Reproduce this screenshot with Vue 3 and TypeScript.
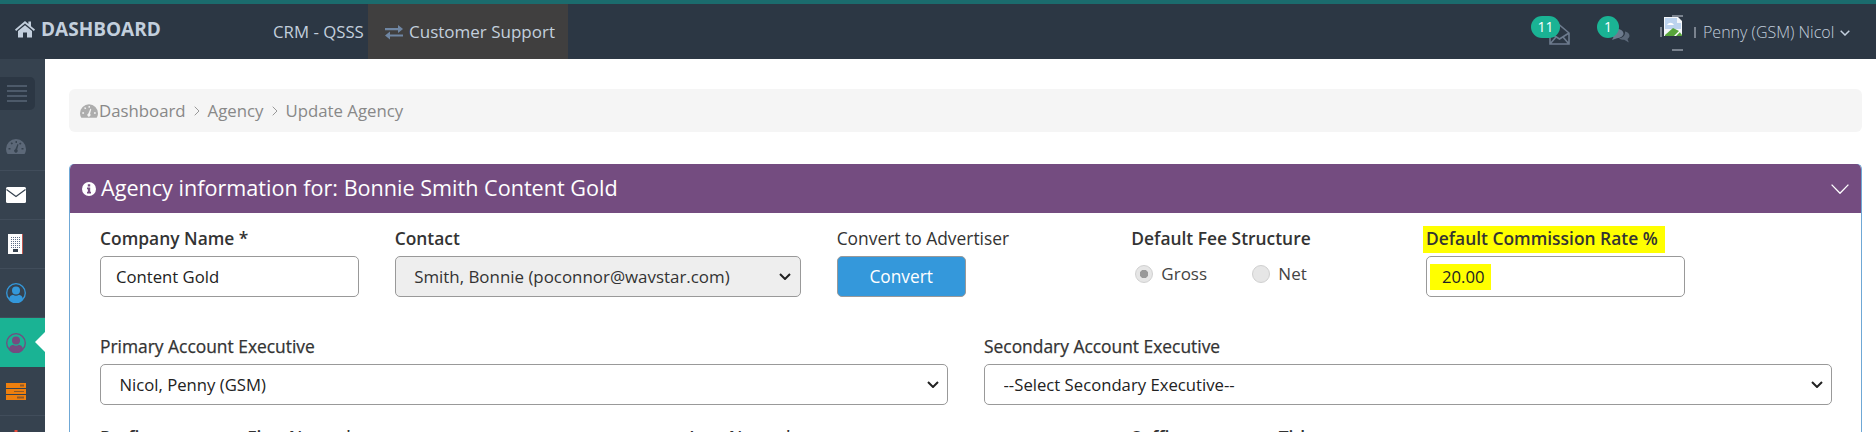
<script setup lang="ts">
const sideItems = ['gauge', 'mail', 'building', 'user', 'active', 'server', 'red']
</script>

<template>
  <div class="page">
    <header class="topbar">
      <div class="brand">
        <svg class="home" viewBox="0 0 20 18" width="20" height="18"><path fill="#c3cfdd" d="M0 9.6 10 1l3.4 2.9V1.6h2.6v4.6l4 3.4-1.1 1.3L10 3.4 1.1 10.9zM3 11l7-5.8 7 5.8v6.6h-5v-5H8v5H3z"/></svg>
        <span>DASHBOARD</span>
      </div>
      <div class="crm">CRM - QSSS</div>
      <div class="support">
        <svg viewBox="0 0 18 16" width="18" height="16"><path fill="#6f86a3" d="M0 4h13V1l5 4-5 4V6.2H0zM18 10.4H5V7.6L0 11.5l5 4v-3h13z"/></svg>
        <span>Customer Support</span>
      </div>
      <div class="spacer"></div>
      <div class="notify mail-n">
        <span class="badge wide">11</span>
        <svg viewBox="0 0 21 21" width="21" height="21"><path fill="none" stroke="#6d7b8e" stroke-width="1.6" d="M1 9 10.5 1 20 9v11H1zM1 9l9.5 6L20 9M1 20l6-7M20 20l-6-7"/></svg>
      </div>
      <div class="notify chat-n">
        <span class="badge">1</span>
        <svg viewBox="0 0 20 16" width="20" height="16"><path fill="#6d7b8e" d="M7 1c3.6 0 6.500 2 6.500 4.600S10.600 10 7 10.200L2 12l1.500-3C1.500 8 .5 7 .5 5.600.5 3 3.400 1 7 1z"/><path fill="#5b6879" d="M15 3.500c2.600.5 4.500 2.200 4.500 4.200 0 1.300-.8 2.400-2 3.200l1.300 3.600-4.600-2.700c-2.200 0-4-.5-5.200-1.500 3.800-.2 6.500-3 6-6.800z"/></svg>
      </div>
      <svg class="avatar" viewBox="0 0 36 36" width="36" height="36">
        <path d="M1 12v10M35 12v11M12 1h11M12 35h11" stroke="#c7ced8" stroke-width="1" fill="none"/>
        <g transform="translate(0 -2)">
          <path fill="#f3f6fa" d="M4 4h14l4 4v15H4z"/>
          <path fill="#bcd3ee" d="M5 5h12v5h4v6H5z"/>
          <path fill="#fff" d="M7 12c2-3 5-3 7 0z"/>
          <path fill="#58a53b" d="M5 22l8-7 6 3 3 4v1H5z"/>
          <path fill="#fff" d="M14 23l6-6v2l-4 4z"/>
        </g>
      </svg>
      <span class="user-name">Penny (GSM) Nicol</span>
      <svg class="caret" viewBox="0 0 10 6" width="10" height="6"><path fill="none" stroke="#c3cfdd" stroke-width="1.5" d="M.7.7 5 5 9.300.7"/></svg>
    </header>

    <div class="body">
      <aside class="sidebar">
        <div class="toggle-wrap">
          <div class="toggle"><i></i><i></i><i></i><i></i></div>
        </div>
        <div v-for="item in sideItems" :key="item" class="side-item" :class="{ on: item === 'active' }">
          <svg v-if="item === 'gauge'" viewBox="0 0 20 15" width="20" height="15">
            <path fill="#5c6878" d="M10 0a10 10 0 0 1 10 10c0 2-.6 3.600-1.500 5h-17A9.500 9.500 0 0 1 0 10 10 10 0 0 1 10 0z"/>
            <path fill="#36424f" d="M9.500 2h1.500v2H9.500zM4.500 4l1.500-.8 1 1.600-1.500.8zM2.500 9h2v1.500h-2zM15.500 9h2v1.500h-2zM13 4.500l1.500-1 1 1.300-1.500 1zM11.500 5l1 .4-1.300 5.200a1.800 1.800 0 1 1-1.900-.4z"/>
          </svg>
          <svg v-else-if="item === 'mail'" viewBox="0 0 20 16" width="20" height="16">
            <rect width="20" height="16" rx="1.500" fill="#fff"/>
            <path d="M.5 2.500 10 9.500l9.500-7" fill="none" stroke="#36424f" stroke-width="1.200"/>
          </svg>
          <svg v-else-if="item === 'building'" class="building" viewBox="0 0 15 20" width="15" height="20">
            <rect width="15" height="20" fill="#fdfdfd"/>
            <rect x="14" width="1" height="20" fill="#c2574f"/>
            <path stroke="#5d6d86" stroke-width="1" stroke-dasharray="1 1" fill="none" d="M3 3.500h9M3 5.500h9M3 7.500h9M3 9.500h9M3 11.500h9M3 13.500h9"/>
            <rect x="5" y="15" width="5" height="3" fill="#36424f"/>
          </svg>
          <svg v-else-if="item === 'user' || item === 'active'" viewBox="0 0 20 20" width="20" height="20">
            <g :fill="item === 'user' ? '#3498db' : '#744c80'">
              <circle cx="10" cy="7.500" r="4"/>
              <path d="M3 17c0-3.500 2.500-5 4-5.200 1.800 1.400 4.200 1.400 6 0 1.500.2 4 1.700 4 5.200a9 9 0 0 1-14 0z"/>
            </g>
            <circle cx="10" cy="10" r="9.300" fill="none" :stroke="item === 'user' ? '#3498db' : '#744c80'" stroke-width="1.300"/>
          </svg>
          <svg v-else-if="item === 'server'" viewBox="0 0 20 17" width="20" height="17">
            <rect width="20" height="5" y="0" fill="#ee7f0e"/>
            <rect width="20" height="5" y="6" fill="#ee7f0e"/>
            <rect width="20" height="5" y="12" fill="#ee7f0e"/>
            <path fill="#8e5a2a" d="M14 1.500h4v2h-4zM8 8h10v1H8zM11 13.500h7v2h-7z"/>
          </svg>
          <svg v-else viewBox="0 0 20 20" width="20" height="20"><path fill="#e74c3c" d="M8.500 0h3v6H18v3h-6.500v6h-3V9H2V6h6.500z"/></svg>
        </div>
      </aside>

      <main class="main">
        <nav class="crumbs">
          <svg viewBox="0 0 20 15" width="18" height="14">
            <path fill="#adadad" d="M10 0a10 10 0 0 1 10 10c0 2-.6 3.600-1.500 5h-17A9.500 9.500 0 0 1 0 10 10 10 0 0 1 10 0z"/>
            <path fill="#f5f5f5" d="M9.500 2h1.500v2H9.500zM4.500 4l1.500-.8 1 1.600-1.500.8zM2.500 9h2v1.500h-2zM15.500 9h2v1.500h-2zM11.500 5l1 .4-1.300 5.200a1.800 1.800 0 1 1-1.900-.4z"/>
          </svg>
          <span class="dash">Dashboard</span>
          <svg class="sep" viewBox="0 0 6 10" width="6" height="10"><path fill="none" stroke="#999" stroke-width="1" d="M.7.7 5 5 .7 9.300"/></svg>
          <span>Agency</span>
          <svg class="sep" viewBox="0 0 6 10" width="6" height="10"><path fill="none" stroke="#999" stroke-width="1" d="M.7.7 5 5 .7 9.300"/></svg>
          <span>Update Agency</span>
        </nav>

        <section class="panel">
          <div class="panel-head">
            <svg viewBox="0 0 14 14" width="14" height="14">
              <circle cx="7" cy="7" r="7" fill="#fff"/>
              <path fill="#744c80" d="M5.800 2.300h2.400v2.100H5.800zM5 5.500h3.200v4.300H9v1.700H5V9.800h.9V7.200H5z"/>
            </svg>
            <h2>Agency information for: Bonnie Smith Content Gold</h2>
            <svg class="collapse" viewBox="0 0 18 10" width="18" height="10"><path fill="none" stroke="#fff" stroke-width="1.300" d="M.6.6 9 9.300 17.400.6"/></svg>
          </div>

          <div class="panel-body">
            <div class="grid row-one">
              <div class="field s2">
                <label class="semi">Company Name *</label>
                <input class="control" type="text" value="Content Gold" />
              </div>
              <div class="field s3">
                <label class="semi">Contact</label>
                <select class="control select off wide-text" disabled>
                  <option>Smith, Bonnie (poconnor@wavstar.com)</option>
                </select>
              </div>
              <div class="field s2">
                <label class="plain">Convert to Advertiser</label>
                <div><button class="convert" type="button">Convert</button></div>
              </div>
              <div class="field s2">
                <label class="semi">Default Fee Structure</label>
                <div class="radios">
                  <label class="radio first"><input type="radio" name="fee" checked disabled /><span>Gross</span></label>
                  <label class="radio"><input type="radio" name="fee" disabled /><span>Net</span></label>
                </div>
              </div>
              <div class="field s2">
                <label class="semi"><mark class="mark-label">Default Commission Rate %</mark></label>
                <div class="control rate"><mark class="mark-value">20.00</mark></div>
              </div>
            </div>

            <div class="grid row-two">
              <div class="field s6">
                <label class="mid">Primary Account Executive</label>
                <select class="control select">
                  <option>Nicol, Penny (GSM)</option>
                </select>
              </div>
              <div class="field s6">
                <label class="mid">Secondary Account Executive</label>
                <select class="control select">
                  <option>--Select Secondary Executive--</option>
                </select>
              </div>
            </div>

            <div class="grid row-three">
              <label class="semi s1">Prefix</label>
              <label class="semi s3">First Name *</label>
              <label class="semi s3">Last Name *</label>
              <label class="semi s1">Suffix</label>
              <label class="semi s1">Title</label>
            </div>
          </div>
        </section>
      </main>
    </div>
  </div>
</template>

<style scoped>
.page {
  height: 432px;
  overflow: hidden;
  display: flex;
  flex-direction: column;
  font-family: "Open Sans", "Noto Sans", sans-serif;
  font-size: 17px;
  color: #333;
  background: #fff;
}
.topbar {
  height: 59px;
  box-sizing: border-box;
  border-top: 4px solid #1b6b6d;
  background: #2c3744;
  display: flex;
  align-items: center;
  flex: none;
}
.brand {
  width: 273px;
  box-sizing: border-box;
  padding-left: 15px;
  display: flex;
  align-items: center;
  gap: 6px;
  color: #c3cfdd;
  font-weight: 700;
  font-size: 19px;
  margin-top: -5px;
}
.crm {
  width: 95px;
  color: #c3cfdd;
  font-size: 16.8px;
}
.support {
  width: 200px;
  height: 55px;
  box-sizing: border-box;
  background: #403f3f;
  padding-left: 17px;
  display: flex;
  align-items: center;
  gap: 6px;
  color: #c3cfdd;
  font-size: 17px;
}
.spacer { flex: 1; }
.notify {
  position: relative;
  display: flex;
  align-self: flex-start;
}
.mail-n { margin-top: 20px; width: 21px; margin-right: 40px; }
.chat-n { margin-top: 24px; width: 20px; margin-right: 30px; }
.badge {
  position: absolute;
  top: -8px;
  left: -18px;
  min-width: 22px;
  height: 22px;
  border-radius: 11px;
  background: #1ab394;
  color: #fff;
  font-size: 14px;
  line-height: 22px;
  text-align: center;
}
.chat-n .badge { left: -13px; top: -12px; }
.badge.wide { width: 29px; }
.avatar { margin-right: 7px; margin-top: 2px; flex: none; }
.user-name {
  color: #c3cfdd;
  font-size: 16px;
  font-weight: 300;
  width: 137px;
  white-space: nowrap;
}
.caret { margin-right: 26px; margin-top: 2px; }

.body { flex: 1; display: flex; min-height: 0; }
.sidebar {
  width: 45px;
  flex: none;
  background: #36424f;
}
.toggle-wrap { height: 63px; box-sizing: border-box; padding-top: 18px; }
.toggle {
  width: 35px;
  height: 33px;
  box-sizing: border-box;
  background: #2c3744;
  border-radius: 0 5px 5px 0;
  padding: 8px 8px 0 7px;
  display: flex;
  flex-direction: column;
  gap: 3px;
}
.toggle i { display: block; height: 2px; background: #4d5a6a; }
.side-item {
  height: 49px;
  box-sizing: border-box;
  border-bottom: 1px solid #414d5b;
  display: flex;
  align-items: center;
  padding-left: 6px;
  position: relative;
}
.side-item svg { flex: none; }
.side-item .building { margin-left: 2px; }
.side-item.on { background: #1ab394; border-bottom: 0; }
.side-item.on::after {
  content: "";
  position: absolute;
  right: 0;
  top: 14px;
  border-style: solid;
  border-width: 10px 10px 10px 0;
  border-color: transparent #fff transparent transparent;
}

.main {
  flex: 1;
  min-width: 0;
  padding: 30px 14px 0 24px;
}
.crumbs {
  height: 43px;
  background: #f5f5f5;
  border-radius: 6px;
  display: flex;
  align-items: center;
  padding-left: 11px;
  color: #888;
  gap: 8px;
  font-size: 16.8px;
}
.crumbs .dash { margin-left: -7px; }
.crumbs .sep { flex: none; }

.panel {
  margin-top: 32px;
  border: 1px solid #6fa8d6;
  border-bottom: 0;
  border-radius: 5px 5px 0 0;
}
.panel-head {
  height: 49px;
  margin-top: -1px;
  background: #744c80;
  border-radius: 5px 5px 0 0;
  display: flex;
  align-items: center;
  padding: 0 12px;
  gap: 5px;
  color: #fff;
}
.panel-head h2 {
  margin: -2px 0 0;
  font-size: 21.6px;
  font-weight: 400;
  flex: 1;
}
.panel-body { padding: 13px 29px 0 30px; }
.grid {
  display: grid;
  grid-template-columns: repeat(12, 1fr);
  column-gap: 36px;
}
.s1 { grid-column: span 1; }
.s2 { grid-column: span 2; }
.s3 { grid-column: span 3; }
.s6 { grid-column: span 6; }
.row-two { margin-top: 37px; }
.row-three { margin-top: 20px; }
.field label { display: block; height: 24px; line-height: 24px; margin-bottom: 6px; white-space: nowrap; font-size: 17.4px; }
.grid > label { line-height: 24px; white-space: nowrap; font-size: 17.4px; }
.semi { font-weight: 600; }
.mid { font-weight: 400; -webkit-text-stroke: 0.25px #333; }
.plain { font-weight: 400; }
.control {
  display: block;
  width: 100%;
  height: 41px;
  box-sizing: border-box;
  border: 1px solid #999;
  border-radius: 5px;
  padding: 0 15px;
  background: #fff;
  color: #222;
  font-family: inherit;
  font-size: 16.7px;
}
.select {
  appearance: none;
  padding-left: 18.5px;
  padding-right: 28px;
  background-image: url("data:image/svg+xml,%3Csvg xmlns='http://www.w3.org/2000/svg' width='12' height='7' viewBox='0 0 12 7'%3E%3Cpath d='M1 1l5 5 5-5' fill='none' stroke='%23222' stroke-width='2'/%3E%3C/svg%3E");
  background-repeat: no-repeat;
  background-position: right 8.500px center;
}
.select.off { background-color: #eee; opacity: 1; color: #333; }
.select.wide-text { font-size: 16.9px; }
.convert {
  width: 129px;
  height: 41px;
  border: 1px solid #999;
  border-radius: 5px;
  background: #3498db;
  color: #fff;
  font-family: inherit;
  font-size: 17.3px;
}
.radios { display: flex; height: 37px; align-items: center; padding-left: 4px; margin-top: -1px; }
.field .radio {
  display: flex;
  align-items: center;
  gap: 8px;
  height: 37px;
  margin: 0;
  line-height: 37px;
  color: #444;
  font-weight: 400;
  font-size: 17px;
}
.field .radio.first { width: 117px; }
.radio input {
  appearance: none;
  width: 18px;
  height: 18px;
  margin: 0;
  border-radius: 50%;
  border: 1px solid #d0d0d0;
  background: #e6e6e6;
}
.radio input:checked {
  background: radial-gradient(circle, #999 0 4px, #e6e6e6 4.500px);
}
.mark-label {
  display: inline-block;
  vertical-align: top;
  background: #ff0;
  color: #333;
  margin-left: -3px;
  padding: 0 7px 3px 3px;
  line-height: 24px;
}
.rate {
  display: flex;
  align-items: center;
  padding: 0 0 0 3px;
}
.mark-value {
  background: #ff0;
  color: #222;
  width: 61px;
  height: 26px;
  line-height: 26px;
  box-sizing: border-box;
  padding-left: 12px;
}
</style>
